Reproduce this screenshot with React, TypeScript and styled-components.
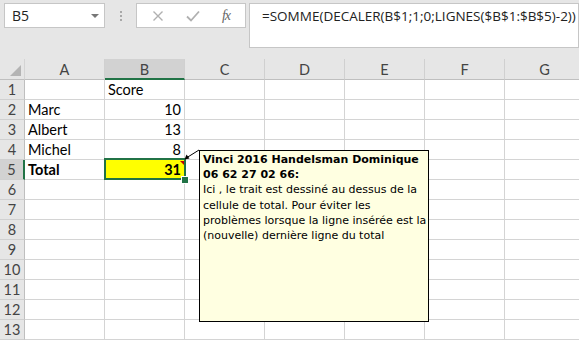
import styled, { createGlobalStyle } from 'styled-components'

const Global = createGlobalStyle`
  html, body { margin: 0; padding: 0; background: #ffffff; overflow: hidden; }
  body { width: 579px; height: 340px; }
`

const COLS = ['A', 'B', 'C', 'D', 'E', 'F', 'G']
const ROWS = 13

const cells: Record<string, { text: string; align?: 'left' | 'right'; bold?: boolean }> = {
  B1: { text: 'Score' },
  A2: { text: 'Marc' },
  B2: { text: '10', align: 'right' },
  A3: { text: 'Albert' },
  B3: { text: '13', align: 'right' },
  A4: { text: 'Michel' },
  B4: { text: '8', align: 'right' },
  A5: { text: 'Total', bold: true },
  B5: { text: '31', align: 'right', bold: true },
}

const commentLines = [
  'Ici , le trait est dessiné au dessus de la',
  'cellule de total. Pour éviter les',
  'problèmes lorsque la ligne insérée est la',
  '(nouvelle) dernière ligne du total',
]

const Page = styled.div`
  width: 579px;
  height: 340px;
  position: relative;
  overflow: hidden;
  background: #ffffff;
`

const TopBar = styled.div`
  height: 59px;
  background: #e6e6e6;
  display: flex;
  align-items: flex-start;
  padding: 3px 0 0 4px;
  box-sizing: border-box;
`

const NameBox = styled.div`
  width: 101px;
  height: 25px;
  box-sizing: border-box;
  background: #fff;
  border: 1px solid #c6c6c6;
  display: flex;
  align-items: center;
  justify-content: space-between;
  padding: 0 5px 0 7px;
  font-family: 'Open Sans', 'Liberation Sans', sans-serif;
  font-size: 14px;
  color: #222;
`

const DropArrow = styled.span`
  width: 0;
  height: 0;
  border-left: 4px solid transparent;
  border-right: 4px solid transparent;
  border-top: 4px solid #777;
`

const Grip = styled.div`
  width: 31px;
  height: 25px;
  display: flex;
  flex-direction: column;
  align-items: center;
  justify-content: center;
  gap: 2px;
  span {
    width: 2px;
    height: 2px;
    background: #a8a8a8;
  }
`

const FxBox = styled.div`
  width: 110px;
  height: 25px;
  box-sizing: border-box;
  background: #fff;
  border: 1px solid #c6c6c6;
  display: flex;
  align-items: center;
  justify-content: space-around;
  padding: 0 4px;
`

const FxLabel = styled.span`
  font-family: 'Liberation Serif', serif;
  font-style: italic;
  font-size: 14px;
  color: #666;
  letter-spacing: -1px;
`

const FormulaBox = styled.div`
  flex: 1;
  margin-left: 3px;
  height: 45px;
  box-sizing: border-box;
  background: #fff;
  border: 1px solid #c6c6c6;
  padding: 3px 0 0 12px;
  font-family: 'Open Sans', 'Liberation Sans', sans-serif;
  font-size: 13.5px;
  color: #222;
  white-space: nowrap;
`

const Sheet = styled.div`
  display: grid;
  grid-template-columns: 25px repeat(7, 80px);
  grid-auto-rows: 20px;
  grid-template-rows: 21px;
  font-family: 'Lato', 'Liberation Sans', sans-serif;
  font-size: 14.5px;
  color: #000;
`

const Corner = styled.div`
  background: #e6e6e6;
  border-right: 1px solid #d4d4d4;
  border-bottom: 1px solid #bfbfbf;
  box-sizing: border-box;
  position: relative;
  &::after {
    content: '';
    position: absolute;
    right: 3px;
    bottom: 3px;
    border-left: 11px solid transparent;
    border-bottom: 11px solid #b4b4b4;
  }
`

const ColHead = styled.div<{ $active?: boolean }>`
  background: ${p => (p.$active ? '#d2d2d2' : '#e6e6e6')};
  border-right: 1px solid #d0d0d0;
  border-bottom: ${p => (p.$active ? '2px solid #217346' : '1px solid #bfbfbf')};
  box-sizing: border-box;
  display: flex;
  align-items: center;
  justify-content: center;
  color: #444;
  padding-top: ${p => (p.$active ? '1px' : '0')};
`

const RowHead = styled.div<{ $active?: boolean }>`
  background: ${p => (p.$active ? '#d2d2d2' : '#e6e6e6')};
  border-right: ${p => (p.$active ? '2px solid #217346' : '1px solid #bfbfbf')};
  border-bottom: 1px solid #d0d0d0;
  box-sizing: border-box;
  display: flex;
  align-items: center;
  justify-content: center;
  color: #444;
`

const Cell = styled.div<{ $align?: 'left' | 'right'; $bold?: boolean; $fill?: string }>`
  border-right: 1px solid #d4d4d4;
  border-bottom: 1px solid #d4d4d4;
  box-sizing: border-box;
  background: ${p => p.$fill || '#fff'};
  display: flex;
  align-items: center;
  justify-content: ${p => (p.$align === 'right' ? 'flex-end' : 'flex-start')};
  padding: 0 3px;
  font-weight: ${p => (p.$bold ? 700 : 400)};
  white-space: nowrap;
`

const Selection = styled.div`
  position: absolute;
  left: 104px;
  top: 158px;
  width: 82px;
  height: 22px;
  box-sizing: border-box;
  border: 2px solid #217346;
  pointer-events: none;
`

const FillHandle = styled.div`
  position: absolute;
  left: 181px;
  top: 176px;
  width: 6px;
  height: 6px;
  background: #217346;
  border: 1px solid #fff;
`

const RedMark = styled.div`
  position: absolute;
  left: 180px;
  top: 161px;
  border-left: 4px solid transparent;
  border-top: 4px solid #c00000;
`

const Comment = styled.div`
  position: absolute;
  left: 199px;
  top: 150px;
  width: 230px;
  height: 172px;
  box-sizing: border-box;
  background: #ffffe1;
  border: 1px solid #000;
  padding: 1px 3px;
  font-family: 'DejaVu Sans', sans-serif;
  font-size: 11px;
  line-height: 15.2px;
  color: #000;
  white-space: nowrap;
`

const Author = styled.div`
  font-weight: 700;
`

const Line = styled.div``

const Arrow = styled.svg`
  position: absolute;
  left: 180px;
  top: 145px;
  overflow: visible;
`

function App(): JSX.Element {
  return (
    <Page>
      <Global />
      <TopBar>
        <NameBox>
          B5
          <DropArrow />
        </NameBox>
        <Grip>
          <span />
          <span />
          <span />
        </Grip>
        <FxBox>
          <svg width="12" height="12" viewBox="0 0 12 12">
            <path d="M1.5 1.5 L10.5 10.5 M10.5 1.5 L1.5 10.5" stroke="#b0b0b0" strokeWidth="1.4" fill="none" />
          </svg>
          <svg width="14" height="12" viewBox="0 0 14 12">
            <path d="M1 6.5 L5 10.5 L13 1.5" stroke="#b0b0b0" strokeWidth="1.8" fill="none" />
          </svg>
          <FxLabel>fx</FxLabel>
        </FxBox>
        <FormulaBox>=SOMME(DECALER(B$1;1;0;LIGNES($B$1:$B$5)-2))</FormulaBox>
      </TopBar>
      <Sheet>
        <Corner />
        {COLS.map(c => (
          <ColHead key={c} $active={c === 'B'}>
            {c}
          </ColHead>
        ))}
        {Array.from({ length: ROWS }, (_, i) => i + 1).map(r => [
          <RowHead key={'r' + r} $active={r === 5}>
            {r}
          </RowHead>,
          ...COLS.map(c => {
            const d = cells[c + r]
            return (
              <Cell key={c + r} $align={d?.align} $bold={d?.bold} $fill={c + r === 'B5' ? '#ffff00' : undefined}>
                {d?.text}
              </Cell>
            )
          }),
        ])}
      </Sheet>
      <Selection />
      <RedMark />
      <FillHandle />
      <Arrow width="20" height="16">
        <line x1="19" y1="5" x2="7" y2="12.5" stroke="#000" strokeWidth="1" />
        <path d="M4.5 14.5 L6.5 9.5 L9.5 13.5 Z" fill="#000" />
      </Arrow>
      <Comment>
        <Author>Vinci 2016 Handelsman Dominique</Author>
        <Author>06 62 27 02 66:</Author>
        {commentLines.map(l => (
          <Line key={l}>{l}</Line>
        ))}
      </Comment>
    </Page>
  )
}

export default App
